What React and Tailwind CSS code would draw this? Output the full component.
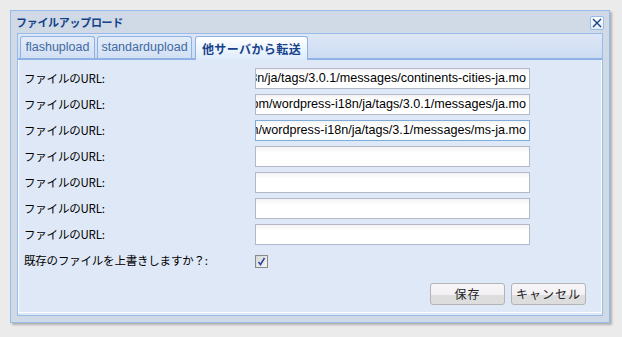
import React, { useState } from 'react';

const urls = [
  'http://svn.automattic.com/wordpress-i18n/ja/tags/3.0.1/messages/continents-cities-ja.mo',
  'http://svn.automattic.com/wordpress-i18n/ja/tags/3.0.1/messages/ja.mo',
  'http://svn.automattic.com/wordpress-i18n/ja/tags/3.1/messages/ms-ja.mo',
  '',
  '',
  '',
  '',
];

const jp = { fontFamily: '"Noto Sans CJK JP", "DejaVu Sans", sans-serif' };
const latin = { fontFamily: '"Liberation Sans", Arial, "Noto Sans CJK JP", sans-serif' };

function UrlField({ value, focused }) {
  return (
    <div
      className={`flex h-[21px] w-[275px] items-center justify-end overflow-hidden whitespace-nowrap border bg-white bg-gradient-to-b from-[#f3f3f3] to-white to-[30%] pr-[3px] text-[12.6px] text-black ${
        focused ? 'border-[#7eadd9]' : 'border-[#b5b8c8]'
      }`}
      style={latin}
    >
      {value}
    </div>
  );
}

export default function App() {
  const [overwrite, setOverwrite] = useState(true);

  return (
    <div className="min-h-[337px] w-full bg-[#ebebeb] pt-[10px] pl-[10px]">
      <div className="h-[313px] w-[600px] border border-[#99bbe8] bg-[#cfdae6] shadow-[2px_2px_2px_rgba(0,0,0,0.25)]">
        {/* title bar */}
        <div className="flex h-[22px] items-center justify-between pl-[5px] pr-[5px] pt-[1px]">
          <span className="text-[11px] font-bold tracking-[-0.3px] text-[#15428b]" style={jp}>
            ファイルアップロード
          </span>
          <button className="flex h-[14px] w-[14px] items-center justify-center rounded-[2px] border border-[#99bbe8] bg-gradient-to-b from-white to-[#e3ecf7]">
            <svg width="10" height="10" viewBox="0 0 10 10">
              <path d="M1 1 L9 9 M9 1 L1 9" stroke="#15428b" strokeWidth="1.4" />
            </svg>
          </button>
        </div>

        {/* panel */}
        <div className="mx-[6px] h-[283px] border border-[#99bbe8] bg-[#dfe8f6]">
          {/* tab strip */}
          <div className="flex h-[26px] items-end gap-[2px] border-b-2 border-[#8db2e3] bg-gradient-to-b from-[#dde7f6] to-[#cddcf3] pl-[2px]">
            <div className="flex h-[22px] w-[75px] items-center justify-center rounded-t-[3px] border border-b-0 border-[#8db2e3] bg-gradient-to-b from-[#e4ecf8] to-[#d3e0f4] text-[12.5px] text-[#416aa3]" style={latin}>
              flashupload
            </div>
            <div className="flex h-[22px] w-[95px] items-center justify-center rounded-t-[3px] border border-b-0 border-[#8db2e3] bg-gradient-to-b from-[#e4ecf8] to-[#d3e0f4] text-[12.5px] text-[#416aa3]" style={latin}>
              standardupload
            </div>
            <div className="ml-[1px] -mb-[2px] flex h-[24px] w-[113px] items-center justify-center rounded-t-[3px] border border-b-0 border-[#8db2e3] bg-gradient-to-b from-white to-[#deebfb] text-[12px] font-bold tracking-[0.4px] text-[#15428b]" style={jp}>
              他サーバから転送
            </div>
          </div>

          {/* body */}
          <div className="flex h-[253px] flex-col border-x border-b border-[#fafcff] pl-[5px] pt-[8px]">
            <div className="flex flex-col gap-[5px]">
              {urls.map((u, i) => (
                <div key={i} className="flex h-[21px] items-center">
                  <label className="w-[231px] text-[11.5px] tracking-[-0.2px] text-black" style={jp}>
                    ファイルのURL:
                  </label>
                  <UrlField value={u} focused={i === 2} />
                </div>
              ))}
            </div>

            <div className="mt-[9px] flex h-[14px] items-center">
              <label className="w-[231px] text-[11.5px] tracking-[-0.2px] text-black" style={jp}>
                既存のファイルを上書きしますか？:
              </label>
              <button
                onClick={() => setOverwrite(!overwrite)}
                className="flex h-[13px] w-[13px] items-center justify-center border border-[#8a8a8a] bg-gradient-to-br from-[#d6d6d6] to-[#f4f4f4]"
              >
                {overwrite && (
                  <svg width="9" height="9" viewBox="0 0 9 9">
                    <path d="M1.5 5 L3.5 7.5 L7.5 1" fill="none" stroke="#2c4ca0" strokeWidth="1.6" />
                  </svg>
                )}
              </button>
            </div>

            <div className="mt-[15px] flex justify-end gap-[6px] pr-[15px]">
              {['保存', 'キャンセル'].map((t) => (
                <button
                  key={t}
                  className="flex h-[22px] w-[75px] items-center justify-center rounded-[3px] border border-[#b4b4b4] bg-[linear-gradient(to_bottom,#f8f5f8_0%,#f3f0f3_55%,#dddddd_56%,#dddddd_100%)] text-[12px] tracking-[1px] text-[#222]"
                  style={jp}
                >
                  {t}
                </button>
              ))}
            </div>
          </div>
        </div>
      </div>
    </div>
  );
}
